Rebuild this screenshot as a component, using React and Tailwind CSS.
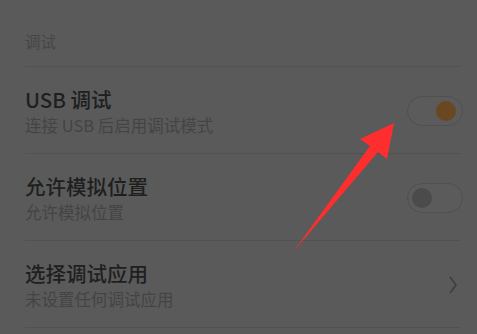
export default function App() {
  const rows = [
    { title: "USB 调试", sub: "连接 USB 后启用调试模式", type: "on" },
    { title: "允许模拟位置", sub: "允许模拟位置", type: "off" },
    { title: "选择调试应用", sub: "未设置任何调试应用", type: "link" },
  ];

  return (
    <div
      className="relative w-[477px] h-[334px] overflow-hidden bg-[#5a5a5a]"
      style={{ fontFamily: '"Noto Sans CJK SC", "Noto Sans", sans-serif' }}
    >
      <div className="ml-[25px] mr-[17px]">
        <div className="h-[67px] flex items-center pt-[16px] border-b border-[#525252]">
          <span className="text-[15.5px] leading-5 text-[#464646]">调试</span>
        </div>

        {rows.map((r) => (
          <div
            key={r.title}
            className="flex items-center justify-between pt-5 pb-[18px] border-b border-[#525252]"
          >
            <div className="flex flex-col">
              <span className="text-[20.5px] leading-6 font-medium text-[#1f1f1f]">{r.title}</span>
              <span className="mt-1 text-[16.5px] leading-5 text-[#444444]">{r.sub}</span>
            </div>

            {r.type === "on" && (
              <div className="-mr-[3px] w-[56px] h-[30px] rounded-full border border-[#505050] bg-[#5b5b5b] flex items-center justify-end pr-[6px]">
                <div className="w-5 h-5 rounded-full bg-[#6a4720]" />
              </div>
            )}
            {r.type === "off" && (
              <div className="-mr-[3px] w-[56px] h-[30px] rounded-full border border-[#505050] bg-[#5b5b5b] flex items-center justify-start pl-[4px]">
                <div className="w-5 h-5 rounded-full bg-[#4b4b4b]" />
              </div>
            )}
            {r.type === "link" && (
              <svg width="10" height="20" viewBox="0 0 10 20" className="mr-[2px]">
                <path d="M2 2 L8 10 L2 18" fill="none" stroke="#3e3e3e" strokeWidth="1.6" />
              </svg>
            )}
          </div>
        ))}
      </div>

      <svg
        className="absolute left-0 top-0 pointer-events-none"
        width="477"
        height="334"
        viewBox="0 0 477 334"
      >
        <polygon
          points="394,123 387,159 378,152 293,252 370,146 360,139"
          fill="#ff2e2e"
        />
      </svg>
    </div>
  );
}
